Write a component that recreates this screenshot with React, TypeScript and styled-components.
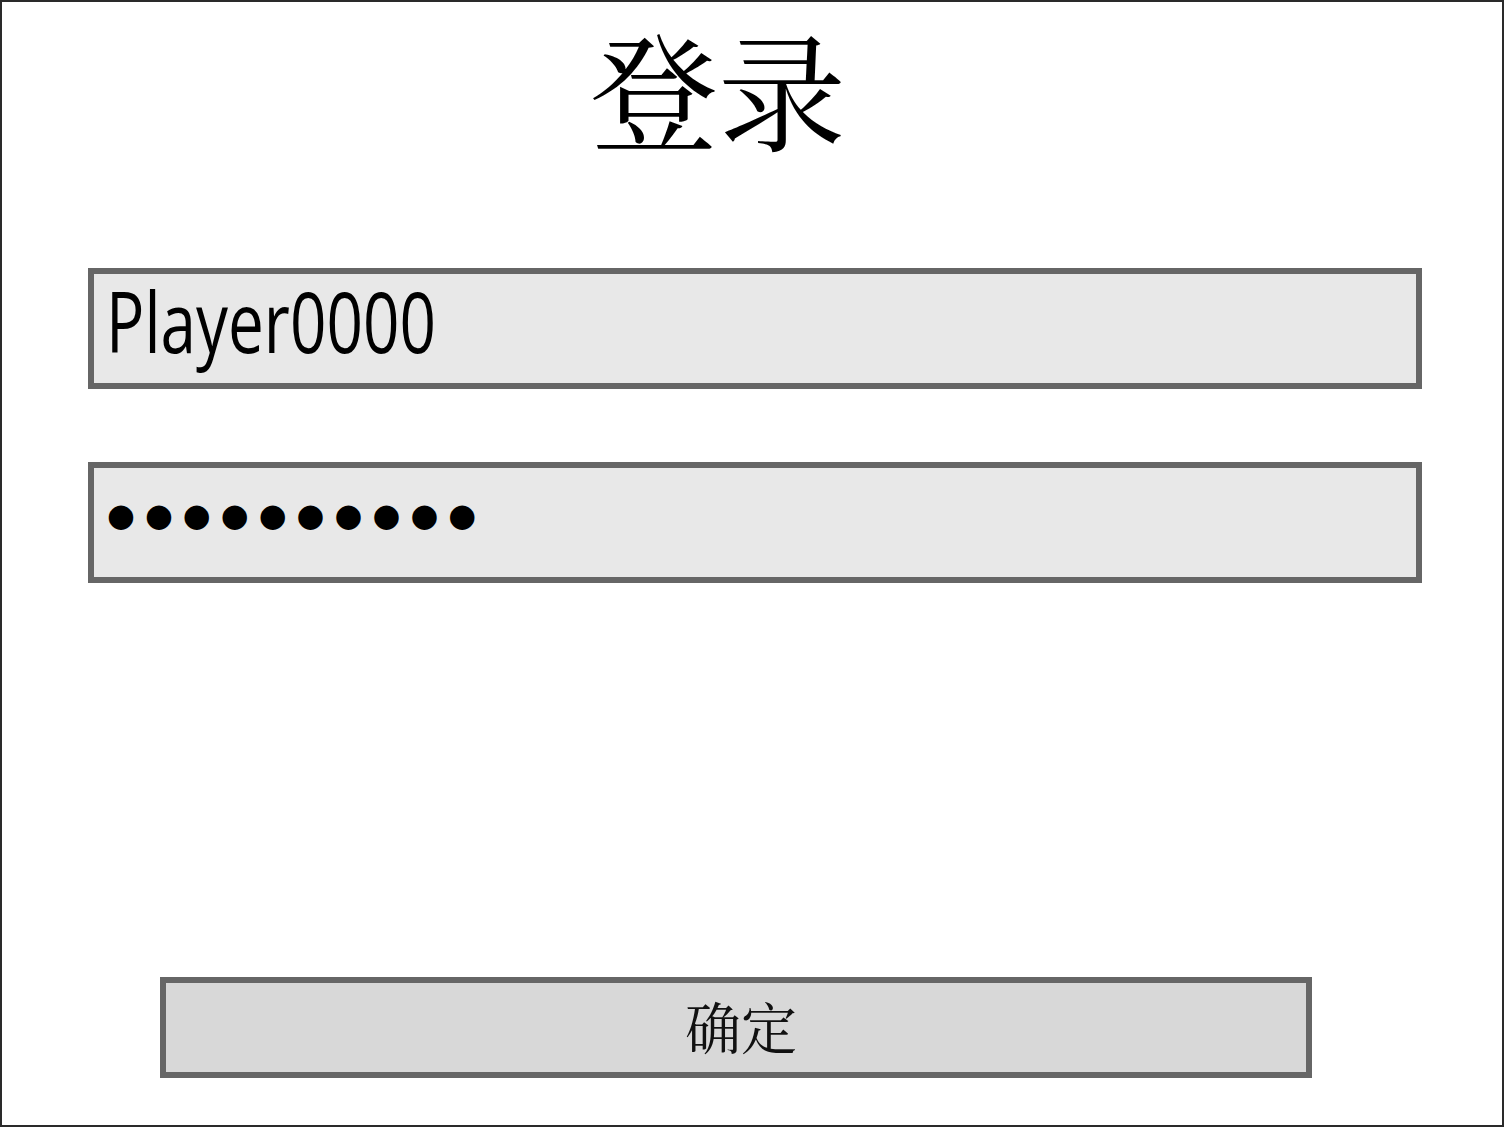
import React from "react";
import styled, { createGlobalStyle } from "styled-components";

const Global = createGlobalStyle`
  html, body { margin: 0; padding: 0; background: #ffffff; }
  body { font-family: "Open Sans", "Noto Sans CJK SC", sans-serif; }
  * { box-sizing: border-box; }
`;

const Frame = styled.div`
  width: 1504px;
  height: 1127px;
  border: 2px solid #2a2a2a;
  background: #ffffff;
  display: flex;
  flex-direction: column;
`;

const Title = styled.h1`
  margin: 5px 0 0 0;
  padding-right: 68px;
  font-family: "Noto Serif CJK SC", "Noto Sans CJK SC", serif;
  font-weight: 400;
  font-size: 128px;
  line-height: 160px;
  text-align: center;
  color: #000;
`;

const Field = styled.div<{ $top: number }>`
  margin: ${(p) => p.$top}px 0 0 86px;
  width: 1334px;
  height: 121px;
  border: 6px solid #666666;
  background: #e8e8e8;
  display: flex;
  align-items: center;
  padding-left: 14px;
`;

const Value = styled.span`
  font-family: "Open Sans", sans-serif;
  font-size: 84px;
  line-height: 1;
  color: #000;
  display: inline-block;
  transform: scaleX(0.76);
  transform-origin: left center;
  margin-left: -2px;
  margin-top: -16px;
  white-space: nowrap;
`;

const Mask = styled.span`
  font-family: "DejaVu Sans", sans-serif;
  font-size: 32px;
  line-height: 1;
  letter-spacing: 10px;
  color: #000;
  white-space: nowrap;
  margin-left: -1px;
  margin-top: -16px;
`;

const Spacer = styled.div`
  flex: 1;
`;

const Button = styled.button`
  margin: 0 0 47px 158px;
  width: 1152px;
  height: 101px;
  border: 6px solid #666666;
  background: #d8d8d8;
  font-family: "Noto Serif CJK SC", "Noto Sans CJK SC", serif;
  font-size: 56px;
  color: #111;
  display: flex;
  align-items: center;
  justify-content: center;
  padding: 0 0 6px 10px;
  cursor: pointer;
`;

export default function App() {
  return (
    <>
      <Global />
      <Frame>
        <Title>登录</Title>
        <Field $top={101}>
          <Value>Player0000</Value>
        </Field>
        <Field $top={73}>
          <Mask>●●●●●●●●●●</Mask>
        </Field>
        <Spacer />
        <Button>确定</Button>
      </Frame>
    </>
  );
}
